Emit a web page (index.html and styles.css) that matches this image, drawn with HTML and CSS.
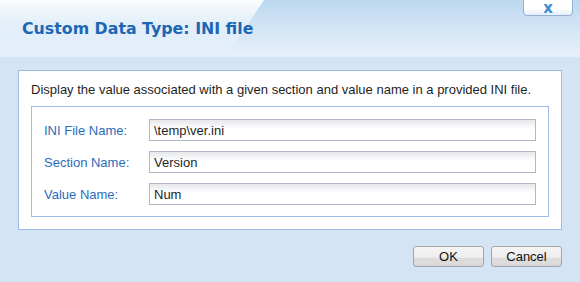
FILE: index.html
```html
<!DOCTYPE html>
<html lang="en">
<head>
    <meta charset="UTF-8">
    <title>Custom Data Type: INI file</title>
    <link rel="stylesheet" href="styles.css">
</head>
<body>
    <div class="dialog">
        <div class="dialog-header">
            <h1 class="dialog-title">Custom Data Type: INI file</h1>
            <button class="close-btn" type="button">x</button>
        </div>

        <div class="dialog-body">
            <div class="panel">
                <p class="description">Display the value associated with a given section and value name in a provided INI file.</p>

                <div class="fields">
                    <div class="field-row">
                        <label for="iniFile">INI File Name:</label>
                        <input type="text" id="iniFile" value="\temp\ver.ini">
                    </div>
                    <div class="field-row">
                        <label for="section">Section Name:</label>
                        <input type="text" id="section" value="Version">
                    </div>
                    <div class="field-row">
                        <label for="valueName">Value Name:</label>
                        <input type="text" id="valueName" value="Num">
                    </div>
                </div>
            </div>

            <div class="actions">
                <button type="button" class="btn">OK</button>
                <button type="button" class="btn">Cancel</button>
            </div>
        </div>
    </div>
</body>
</html>
```

FILE: styles.css
```css
* {
    margin: 0;
    padding: 0;
    box-sizing: border-box;
}

body {
    font-family: 'Liberation Sans', Arial, sans-serif;
    font-size: 13px;
    background: #d5e4f5;
    width: 580px;
    height: 282px;
    overflow: hidden;
}

.dialog {
    display: flex;
    flex-direction: column;
    height: 282px;
}

.dialog-header {
    position: relative;
    height: 57px;
    background: linear-gradient(to bottom, #bcd8f0 0%, #d3e5f6 50%, #e6f0fa 100%);
    overflow: hidden;
    display: flex;
    align-items: center;
    padding-left: 22px;
}

/* gloss on the left side of the header */
.dialog-header::before {
    content: "";
    position: absolute;
    left: 0;
    top: 0;
    width: 100%;
    height: 100%;
    background: linear-gradient(to bottom, rgba(255,255,255,0.95) 0%, rgba(255,255,255,0.4) 45%, rgba(255,255,255,0) 100%);
    clip-path: polygon(0 0, 264px 0, 226px 57px, 0 57px);
}

.dialog-title {
    position: relative;
    font-family: 'DejaVu Sans', Verdana, sans-serif;
    font-size: 15.8px;
    font-weight: bold;
    color: #1b67b4;
    margin-top: -1px;
}

.close-btn {
    position: absolute;
    top: -1px;
    left: 523px;
    width: 50px;
    height: 17px;
    border: 1px solid #93b0d2;
    border-radius: 0 0 4px 4px;
    background: linear-gradient(to bottom, #ffffff 0%, #ffffff 55%, #e4eef8 100%);
    color: #3d8bd0;
    font-family: 'DejaVu Sans', Verdana, sans-serif;
    font-size: 15px;
    font-weight: bold;
    line-height: 12px;
    text-align: center;
    cursor: pointer;
}

.dialog-body {
    padding: 13px 18px 0;
}

.panel {
    background: white;
    border: 1px solid #9dbde6;
    padding: 11px 12px 12px;
    height: 160px;
}

.description {
    color: #1f1f1f;
    line-height: 16px;
    margin-bottom: 8px;
}

.fields {
    border: 1px solid #9dbde6;
    padding: 12px 12px 11px;
    display: flex;
    flex-direction: column;
    gap: 10px;
}

.field-row {
    display: flex;
    align-items: center;
}

.field-row label {
    width: 105px;
    color: #2b6cbb;
}

.field-row input {
    flex: 1;
    height: 22px;
    border: 1px solid #b2b6c6;
    padding: 0 4px;
    font-family: 'Liberation Sans', Arial, sans-serif;
    font-size: 13px;
    color: #1f1f1f;
    background: linear-gradient(to bottom, #e6e7ea 0%, #ffffff 45%, #ffffff 100%);
    outline: none;
}

.actions {
    display: flex;
    justify-content: flex-end;
    gap: 7px;
    margin-top: 16px;
}

.btn {
    width: 71px;
    height: 21px;
    border: 1px solid #a5a5a5;
    border-radius: 3px;
    background: linear-gradient(to bottom, #f4f4f4 0%, #eeeeee 55%, #dcdcdc 56%, #dcdcdc 90%, #cfcfcf 100%);
    font-family: 'Liberation Sans', Arial, sans-serif;
    font-size: 13px;
    color: #111;
    cursor: pointer;
}
```
